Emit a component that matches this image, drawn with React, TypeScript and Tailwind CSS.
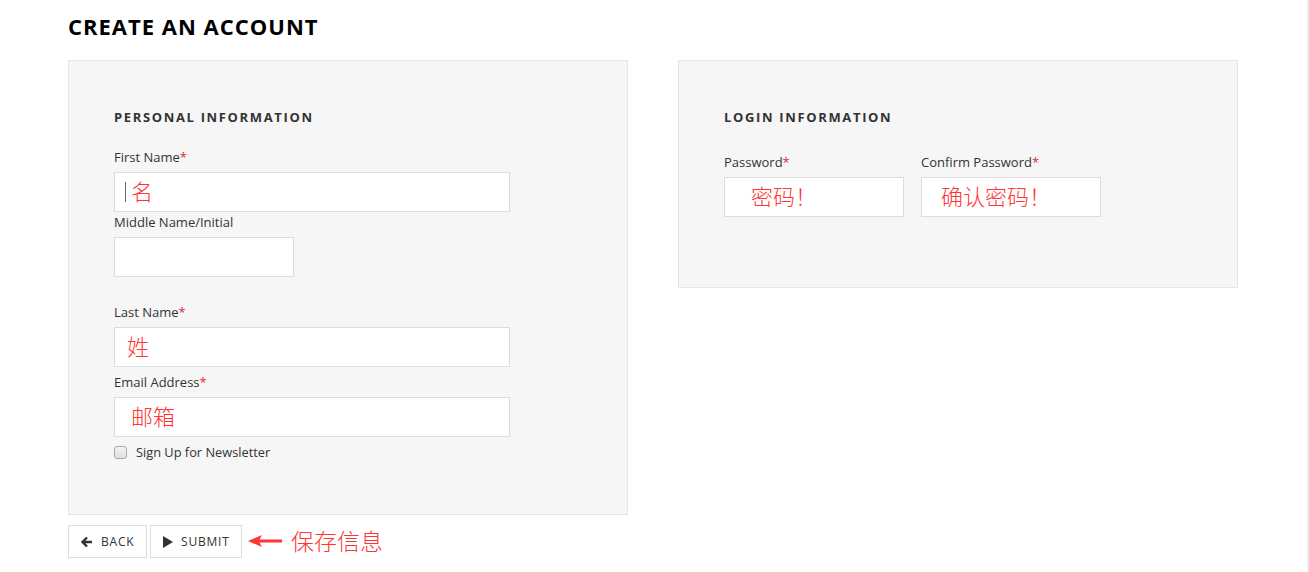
import React from "react";

const font = { fontFamily: '"Open Sans", "Noto Sans CJK SC", sans-serif' };

function Label({ text, req, className = "" }: { text: string; req?: boolean; className?: string }) {
  return (
    <div className={`text-[13px] leading-[18px] text-[#333] ${className}`}>
      {text}
      {req && <span className="text-[#e02b27]">*</span>}
    </div>
  );
}

function Field({
  value,
  width,
  pad,
  cursor,
  className = "",
}: {
  value?: string;
  width: string;
  pad: string;
  cursor?: boolean;
  className?: string;
}) {
  return (
    <div
      className={`${width} h-[40px] bg-white border border-[#dcdcdc] flex items-center ${pad} text-[#ff3535] ${className}`}
    >
      {cursor && <span className="w-px h-[20px] bg-[#666] mr-[5px]" />}
      <span
        className="text-[22px] leading-[26px] font-light mb-[5px]"
        style={{ fontFamily: '"Noto Sans CJK SC", sans-serif' }}
      >
        {value}
      </span>
    </div>
  );
}

export default function App() {
  return (
    <div className="w-[1309px] h-[572px] bg-white border-r-2 border-[#eeeeee] overflow-hidden" style={font}>
      <div className="pl-[68px]">
        <h1 className="pt-[10px] h-[60px] text-[22px] leading-[32px] font-bold tracking-[1px] text-black">
          CREATE AN ACCOUNT
        </h1>

        <div className="flex items-start gap-[50px]">
          <div>
            <div className="w-[560px] h-[455px] bg-[#f6f6f6] border border-[#e6e6e6] pt-[48px] pl-[45px]">
              <h2 className="text-[13px] leading-[16px] font-bold tracking-[1.65px] text-[#333]">
                PERSONAL INFORMATION
              </h2>
              <Label text="First Name" req className="mt-[23px]" />
              <Field value="名" width="w-[396px]" pad="pl-[10px]" cursor className="mt-[6px]" />
              <Label text="Middle Name/Initial" className="mt-[1px]" />
              <Field width="w-[180px]" pad="pl-[10px]" className="mt-[6px]" />
              <Label text="Last Name" req className="mt-[26px]" />
              <Field value="姓" width="w-[396px]" pad="pl-[12px]" className="mt-[6px]" />
              <Label text="Email Address" req className="mt-[6px]" />
              <Field value="邮箱" width="w-[396px]" pad="pl-[16px]" className="mt-[6px]" />
              <div className="flex items-center mt-[6px]">
                <span className="w-[13px] h-[13px] rounded-[3px] border border-[#aaa] bg-gradient-to-b from-[#f4f4f4] to-[#dedede]" />
                <span className="ml-[9px] text-[12.8px] leading-[18px] text-[#333]">Sign Up for Newsletter</span>
              </div>
            </div>

            <div className="flex items-center mt-[10px] gap-[3px]">
              <button className="h-[33px] w-[79px] border border-[#dcdcdc] bg-white flex items-center pl-[12px] text-[12px] tracking-[0.8px] text-[#333]">
                <svg width="12" height="12" viewBox="0 0 12 12" className="mr-[8px]">
                  <path d="M6 1.5 L1.5 6 L6 10.5 M1.5 6 H11" stroke="#333" strokeWidth="2.4" fill="none" strokeLinejoin="miter" />
                </svg>
                BACK
              </button>
              <button className="h-[33px] w-[92px] border border-[#dcdcdc] bg-white flex items-center pl-[12px] text-[12px] tracking-[0.8px] text-[#333]">
                <svg width="10" height="12" viewBox="0 0 10 12" className="mr-[8px]">
                  <path d="M0 0 L10 6 L0 12 Z" fill="#333" />
                </svg>
                SUBMIT
              </button>
              <svg width="34" height="14" viewBox="0 0 34 14" className="ml-[3px] -mt-[2px]">
                <path d="M0 7 L14 1 L11.5 5.6 L34 5.6 L34 8.4 L11.5 8.4 L14 13 Z" fill="#ff3535" />
              </svg>
              <span
                className="ml-[6px] text-[23px] leading-[30px] font-light text-[#ff3535] -mt-[4px]"
                style={{ fontFamily: '"Noto Sans CJK SC", sans-serif' }}
              >
                保存信息
              </span>
            </div>
          </div>

          <div className="w-[560px] h-[228px] bg-[#f6f6f6] border border-[#e6e6e6] pt-[48px] pl-[45px]">
            <h2 className="text-[13px] leading-[16px] font-bold tracking-[1.65px] text-[#333]">
              LOGIN INFORMATION
            </h2>
            <div className="flex gap-[17px] mt-[28px]">
              <div>
                <Label text="Password" req />
                <Field value="密码！" width="w-[180px]" pad="pl-[26px]" className="mt-[6px]" />
              </div>
              <div>
                <Label text="Confirm Password" req />
                <Field value="确认密码！" width="w-[180px]" pad="pl-[19px]" className="mt-[6px]" />
              </div>
            </div>
          </div>
        </div>
      </div>
    </div>
  );
}
